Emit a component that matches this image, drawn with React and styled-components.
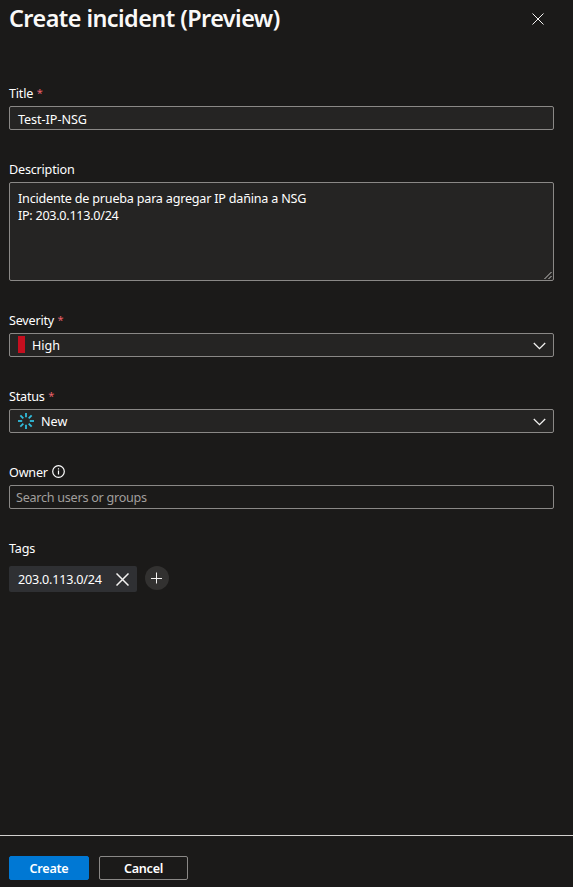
import React from "react";
import styled, { createGlobalStyle } from "styled-components";

const Global = createGlobalStyle`
  * { box-sizing: border-box; }
  body { margin: 0; background: #1b1a19; }
`;

const Panel = styled.div`
  display: flex;
  flex-direction: column;
  height: 887px;
  width: 573px;
  overflow: hidden;
  background: #1b1a19;
  color: #fff;
  font-family: "Noto Sans", sans-serif;
  font-size: 12.6px;
  line-height: 18px;
`;

const Header = styled.header`
  display: flex;
  justify-content: space-between;
  align-items: center;
  height: 38px;
  padding: 0 29px 0 9px;
`;

const Heading = styled.h1`
  margin: -2px 0 0;
  color: #faf9f8;
  font-size: 23.4px;
  font-weight: 600;
  line-height: 32px;
  white-space: nowrap;
`;

const IconButton = styled.button`
  display: flex;
  padding: 0;
  border: 0;
  background: none;
  color: inherit;
`;

const Form = styled.form`
  display: flex;
  flex: 1;
  flex-direction: column;
  gap: 30px;
  padding: 46px 19px 0 9px;
`;

const Field = styled.div`
  display: flex;
  flex-direction: column;
  gap: ${(p) => p.$gap || 4}px;
`;

const Label = styled.label`
  display: flex;
  align-items: center;
  gap: 4px;
  height: 18px;
  padding-top: 2px;
`;

const Text = styled.span`
  white-space: nowrap;
  letter-spacing: ${(p) => (p.$track === undefined ? -0.2 : p.$track)}px;
`;

const Required = styled.span`
  margin: -2px 0 0 -0.5px;
  color: #e8606a;
  font-size: 11px;
`;

const Box = styled.div`
  display: flex;
  align-items: center;
  height: 24px;
  padding: 1px 7px 0 8px;
  border: 1px solid #8a8886;
  border-radius: 2px;
  background: #252423;
`;

const TitleBox = styled(Box)`
  padding-top: 3px;
`;

const SearchBox = styled(Box)`
  padding-left: 6px;
  background: #1b1a19;
  color: #a19f9d;
`;

const TextArea = styled(Box)`
  position: relative;
  flex-direction: column;
  align-items: flex-start;
  height: 99px;
  padding-top: 7px;
  line-height: 17px;
`;

const Grip = styled.svg`
  position: absolute;
  right: 0;
  bottom: 0;
`;

const Spacer = styled.div`
  flex: 1;
`;

const SeverityBar = styled.span`
  width: 7px;
  height: 17px;
  margin: -2px 7px 0 0;
  background: #c50f1f;
`;

const StatusIcon = styled.svg`
  margin: -1px 7px 0 0;
`;

const InfoIcon = styled.svg`
  margin: -4px 0 0 0;
`;

const TagRow = styled.div`
  display: flex;
  gap: 8px;
`;

const Tag = styled.div`
  display: flex;
  align-items: center;
  justify-content: space-between;
  width: 128px;
  height: 26px;
  padding: 1px 8px 0 9px;
  border-radius: 2px;
  background: #2f3033;
`;

const AddButton = styled(IconButton)`
  align-items: center;
  justify-content: center;
  width: 24px;
  height: 24px;
  border-radius: 50%;
  background: #323130;
`;

const Footer = styled.footer`
  display: flex;
  gap: 10px;
  height: 52px;
  padding: 20px 9px 0;
  border-top: 1px solid #d2d0ce;
`;

const Button = styled.button`
  width: ${(p) => (p.$primary ? 80 : 89)}px;
  height: 24px;
  padding: 2px 0 0;
  border: 1px solid ${(p) => (p.$primary ? "#0078d4" : "#8a8886")};
  border-radius: 2px;
  background: ${(p) => (p.$primary ? "#0078d4" : "#1b1a19")};
  color: #fff;
  font: 600 12.6px/20px "Noto Sans", sans-serif;
  letter-spacing: -0.25px;
`;

const Cross = ({ size, color = "#f3f2f1", width = 1.1 }) => (
  <svg width={size} height={size} viewBox={`0 0 ${size} ${size}`} stroke={color} strokeWidth={width}>
    <path d={`M.5 .5L${size - 0.5} ${size - 0.5}M${size - 0.5} .5L.5 ${size - 0.5}`} />
  </svg>
);

const Chevron = () => (
  <svg width="13" height="8" viewBox="0 0 13 8" fill="none" stroke="#f3f2f1" strokeWidth="1.3">
    <path d="M.8 1L6.5 6.7L12.2 1" />
  </svg>
);

const Spinner = () => (
  <StatusIcon width="16" height="16" viewBox="0 0 16 16" stroke="#32bedd" strokeWidth="1.8">
    {[0, 45, 90, 135, 180, 225, 270, 315].map((a) => (
      <path key={a} d="M8 0V4.2" transform={`rotate(${a} 8 8)`} />
    ))}
  </StatusIcon>
);

const Info = () => (
  <InfoIcon width="13" height="13" viewBox="0 0 13 13" fill="none" stroke="#fff" strokeWidth="1.2">
    <circle cx="6.5" cy="6.5" r="5.8" />
    <path d="M6.5 5.5V9.6M6.5 3.3V4.6" />
  </InfoIcon>
);

export default function App() {
  return (
    <Panel>
      <Global />
      <Header>
        <Heading><Text $track={-0.55}>Create incident (Preview)</Text></Heading>
        <IconButton type="button" aria-label="Close"><Cross size={12} width={1} /></IconButton>
      </Header>
      <Form>
        <Field>
          <Label><Text>Title</Text><Required>*</Required></Label>
          <TitleBox><Text $track={-0.05}>Test-IP-NSG</Text></TitleBox>
        </Field>
        <Field>
          <Label><Text>Description</Text></Label>
          <TextArea>
            <Text $track={-0.21}>Incidente de prueba para agregar IP dañina a NSG</Text>
            <Text $track={-0.27}>IP: 203.0.113.0/24</Text>
            <Grip width="9" height="9" viewBox="0 0 9 9" stroke="#c8c6c4">
              <path d="M.5 8L7.5 1M4.5 8L7.5 5" />
            </Grip>
          </TextArea>
        </Field>
        <Field>
          <Label><Text>Severity</Text><Required>*</Required></Label>
          <Box><SeverityBar /><Text $track={0}>High</Text><Spacer /><Chevron /></Box>
        </Field>
        <Field>
          <Label><Text>Status</Text><Required>*</Required></Label>
          <Box><Spinner /><Text $track={0}>New</Text><Spacer /><Chevron /></Box>
        </Field>
        <Field>
          <Label><Text>Owner</Text><Info /></Label>
          <SearchBox><Text $track={-0.26}>Search users or groups</Text></SearchBox>
        </Field>
        <Field $gap={9}>
          <Label><Text>Tags</Text></Label>
          <TagRow>
            <Tag><Text $track={-0.22}>203.0.113.0/24</Text><IconButton type="button" aria-label="Remove tag"><Cross size={13} width={1.5} /></IconButton></Tag>
            <AddButton type="button" aria-label="Add tag">
              <svg width="12" height="12" viewBox="0 0 12 12" stroke="#f3f2f1"><path d="M5.5 .5V11.5M0 6.5H11" /></svg>
            </AddButton>
          </TagRow>
        </Field>
      </Form>
      <Footer>
        <Button $primary>Create</Button>
        <Button>Cancel</Button>
      </Footer>
    </Panel>
  );
}
